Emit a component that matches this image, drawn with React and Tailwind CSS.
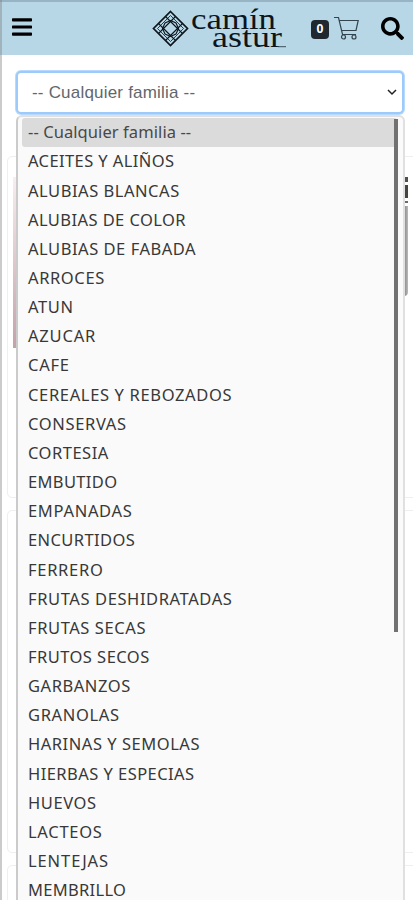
import clsx from "clsx";
import { FaBars, FaSearch } from "react-icons/fa";

const families = [
  { name: "-- Cualquier familia --", tracking: "tracking-[0.08px]" },
  { name: "ACEITES Y ALIÑOS", tracking: "tracking-[0.4px]" },
  { name: "ALUBIAS BLANCAS", tracking: "tracking-[0.53px]" },
  { name: "ALUBIAS DE COLOR", tracking: "tracking-[0.42px]" },
  { name: "ALUBIAS DE FABADA", tracking: "tracking-[0.53px]" },
  { name: "ARROCES", tracking: "tracking-[0.6px]" },
  { name: "ATUN", tracking: "tracking-[0.6px]" },
  { name: "AZUCAR", tracking: "tracking-[0.8px]" },
  { name: "CAFE", tracking: "tracking-[0.75px]" },
  { name: "CEREALES Y REBOZADOS", tracking: "tracking-[0.65px]" },
  { name: "CONSERVAS", tracking: "tracking-[0.65px]" },
  { name: "CORTESIA", tracking: "tracking-[0.5px]" },
  { name: "EMBUTIDO", tracking: "tracking-[0.35px]" },
  { name: "EMPANADAS", tracking: "tracking-[0.7px]" },
  { name: "ENCURTIDOS", tracking: "tracking-[0.4px]" },
  { name: "FERRERO", tracking: "tracking-[0.7px]" },
  { name: "FRUTAS DESHIDRATADAS", tracking: "tracking-[0.6px]" },
  { name: "FRUTAS SECAS", tracking: "tracking-[0.58px]" },
  { name: "FRUTOS SECOS", tracking: "tracking-[0.45px]" },
  { name: "GARBANZOS", tracking: "tracking-[0.55px]" },
  { name: "GRANOLAS", tracking: "tracking-[0.65px]" },
  { name: "HARINAS Y SEMOLAS", tracking: "tracking-[0.53px]" },
  { name: "HIERBAS Y ESPECIAS", tracking: "tracking-[0.45px]" },
  { name: "HUEVOS", tracking: "tracking-[0.6px]" },
  { name: "LACTEOS", tracking: "tracking-[0.7px]" },
  { name: "LENTEJAS", tracking: "tracking-[0.9px]" },
  { name: "MEMBRILLO", tracking: "tracking-[0.3px]" },
];

const Logo = () => (
  <svg width="134" height="42" viewBox="0 0 134 42" className="overflow-visible text-[#0c151b]">
    <g fill="none" stroke="currentColor" strokeWidth="1.1">
      <path d="M17.5 3.500 34.500 20.500 17.500 37.500 0.500 20.500Z" strokeWidth="1.700" />
      <path d="M17.500 7.500 30.500 20.500 17.500 33.500 4.500 20.500Z" strokeWidth="0.800" />
      {/* Lattice strips along the four sides */}
      <path d="M12.500 8.500 29.500 25.500M22.500 8.500 5.500 25.500M5.500 15.500 22.500 32.500M29.500 15.500 12.500 32.500" />
      <path d="M17.500 12.500 23 15 25.500 20.500 23 26 17.500 28.500 12 26 9.500 20.500 12 15Z" />
    </g>
    <g fill="currentColor" className="font-['Liberation_Serif',serif]">
      <text x="38" y="21" fontSize="30" textLength="85" lengthAdjust="spacingAndGlyphs">
        camín
      </text>
      <text x="59" y="38.500" fontSize="30" textLength="70" lengthAdjust="spacingAndGlyphs">
        astur
      </text>
    </g>
    <path d="M125 38.700h8" stroke="currentColor" strokeWidth="0.7" />
  </svg>
);

const CartIcon = () => (
  <svg width="26" height="25" viewBox="0 0 26 25" fill="none" stroke="#34444d" strokeWidth="1.200">
    <path d="M0 1.500h4.500l4 17h13.500M5.200 4.500h19l-2.200 10H7.800" />
    <circle cx="9.500" cy="21" r="2" />
    <circle cx="20" cy="21" r="2" />
  </svg>
);

const Header = () => (
  <header className="flex h-[55px] items-center border-t-2 border-[#98b3c4] bg-[#b7d7e7] pl-3">
    <FaBars className="-mt-1 h-6 w-5 text-black" />
    <div className="ml-[121px] mt-px">
      <Logo />
    </div>
    <div className="ml-[24px] mt-px flex h-[19px] w-[18px] items-center justify-center rounded-[4px] bg-[#212930] font-['Noto_Sans',sans-serif] text-[12px] font-bold text-white">
      0
    </div>
    <div className="ml-[5px] -mt-px">
      <CartIcon />
    </div>
    <FaSearch className="-mt-px ml-[21px] h-[23px] w-[23px] text-black" />
  </header>
);

const FamilySelect = () => (
  <div className="flex h-[43px] w-[388px] items-center justify-between rounded-[5px] border-2 border-[#9ccafa] bg-white pl-[14px] pr-[5px] font-['Liberation_Sans',sans-serif] text-[17px] tracking-[0.2px] text-[#61676d] shadow-[0_0_0_1px_#b9dafc]">
    <span>-- Cualquier familia --</span>
    <svg width="10" height="7" viewBox="0 0 10 7" fill="none" stroke="#222" strokeWidth="1.500">
      <path d="m1 1 4 4 4-4" />
    </svg>
  </div>
);

const FamilyOptions = () => (
  <div className="absolute left-[16px] top-[115px] h-[800px] w-[389px] rounded-t-[6px] border-2 border-[#e0e0e0] border-l-[#cbcbcb] bg-[#fafafa] pl-1 pt-px">
    <ul className="w-[375px]">
      {families.map((family, index) => (
        <li
          key={family.name}
          className={clsx(
            "flex h-[29.170px] items-center whitespace-nowrap pl-[6px] font-['Noto_Sans',sans-serif] text-[16.500px]",
            index === 0 ? "rounded-[3px] bg-[#dbdbdb] text-[#484848]" : "text-[#383838]",
            family.tracking
          )}
        >
          {family.name}
        </li>
      ))}
    </ul>
    {/* Scrollbar thumb */}
    <div className="absolute right-[5px] top-[2px] h-[513px] w-[4px] bg-[#717171]" />
  </div>
);

export default function App() {
  return (
    <div className="relative h-[900px] w-[413px] overflow-hidden bg-white">
      <Header />
      <main className="pl-[7px]">
        <div className="pl-[9px] pt-[16px]">
          <FamilySelect />
        </div>
        {/* Product cards behind the open list */}
        <div className="mt-[42px] flex w-[430px] flex-col gap-[12px]">
          <div className="flex h-[342px] items-start justify-between rounded-[5px] border border-[#efefef] pl-[5px] pr-[28px] pt-[20px]">
            <div className="h-[171px] w-[8px] bg-linear-to-b from-[#f7eef0] to-[#c5a1aa]" />
            <div className="flex w-[5px] flex-col gap-[3px]">
              <div className="h-[5px] bg-[#51504b]" />
              <div className="h-[13px] bg-[#464640]" />
              <div className="h-[2px] bg-[#6b6b65]" />
              <div className="h-[90px] rounded-br-[4px] bg-linear-to-r from-[#777] to-[#bbb]" />
            </div>
          </div>
          <div className="h-[343px] rounded-[5px] border border-[#efefef]" />
          <div className="h-[343px] rounded-[5px] border border-[#efefef]" />
        </div>
      </main>
      <FamilyOptions />
      {/* Window edge */}
      <div className="absolute left-0 top-0 h-full w-[2px] bg-[#7d7d7d]/40" />
    </div>
  );
}
